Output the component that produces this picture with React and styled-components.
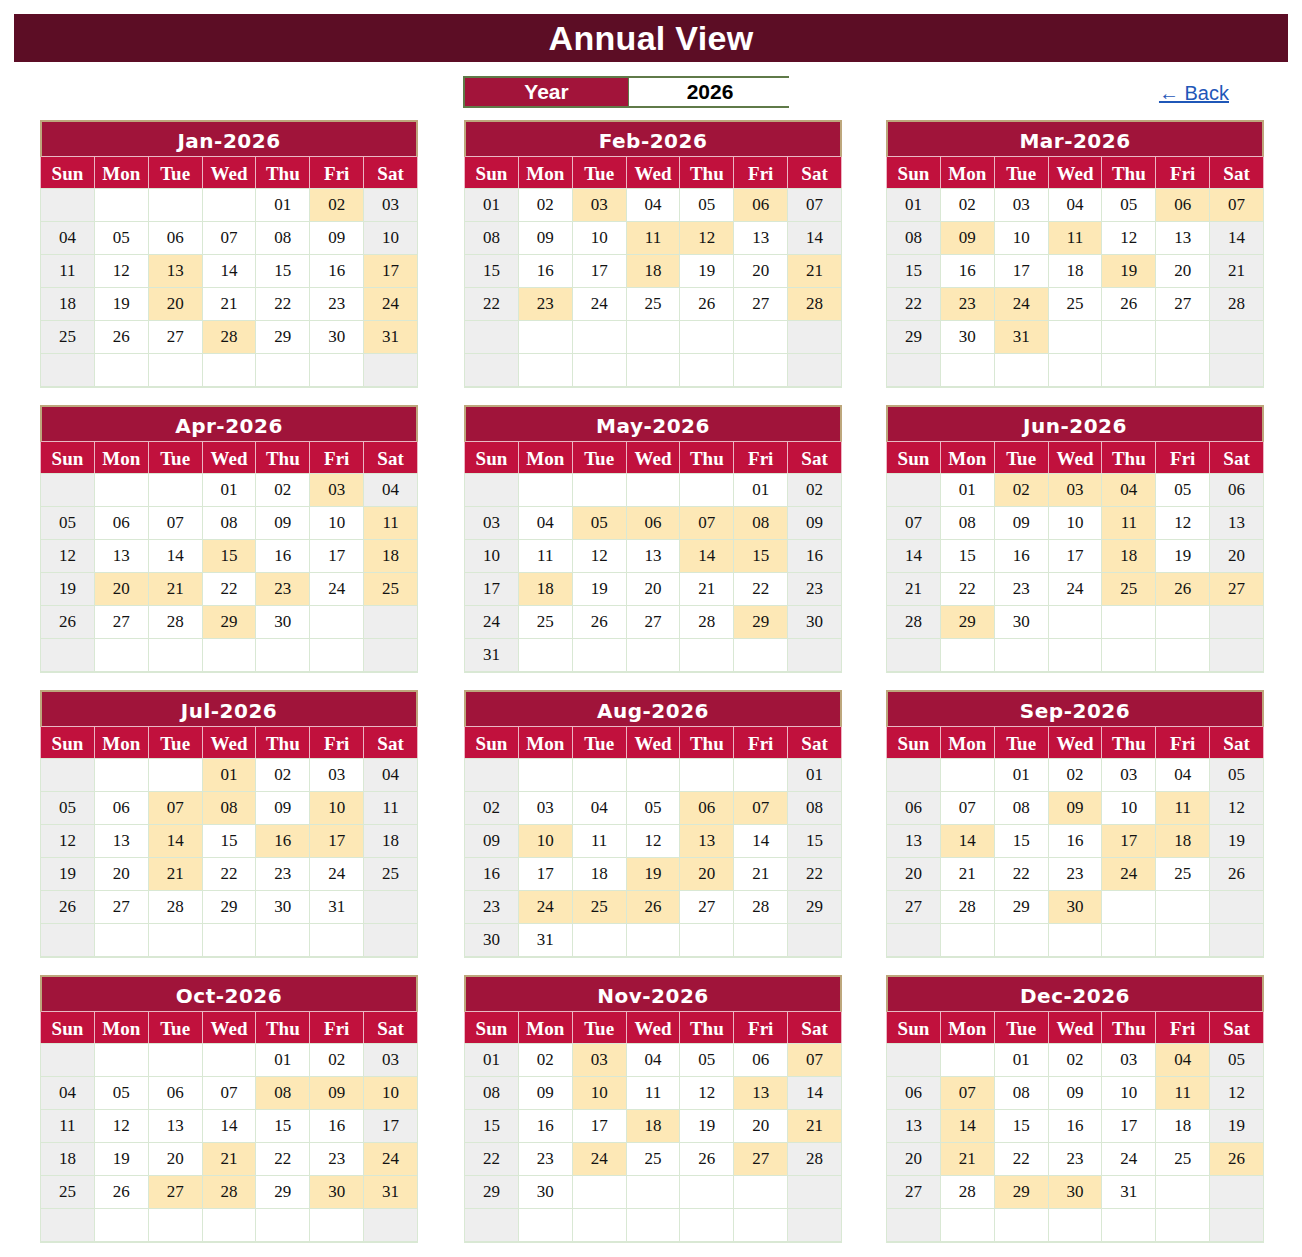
import React from 'react';
import styled, { createGlobalStyle } from 'styled-components';

const GlobalStyle = createGlobalStyle`
  html, body {
    margin: 0;
    padding: 0;
    background: #ffffff;
  }
  * {
    box-sizing: border-box;
  }
`;

const YEAR = 2026;
const MONTHS = ['Jan', 'Feb', 'Mar', 'Apr', 'May', 'Jun', 'Jul', 'Aug', 'Sep', 'Oct', 'Nov', 'Dec'];
const DAYS = ['Sun', 'Mon', 'Tue', 'Wed', 'Thu', 'Fri', 'Sat'];

// marked days per month, as read off the sheet
const MARKED = [
  [2, 13, 17, 20, 24, 28, 31],
  [3, 6, 11, 12, 18, 21, 23, 28],
  [6, 7, 9, 11, 19, 23, 24, 31],
  [3, 11, 15, 18, 20, 21, 23, 25, 29],
  [5, 6, 7, 8, 14, 15, 18, 29],
  [2, 3, 4, 11, 18, 25, 26, 27, 29],
  [1, 7, 8, 10, 14, 16, 17, 21],
  [6, 7, 10, 13, 19, 20, 24, 25, 26],
  [9, 11, 14, 17, 18, 24, 30],
  [8, 9, 10, 21, 24, 27, 28, 30, 31],
  [3, 7, 10, 13, 18, 21, 24, 27],
  [4, 7, 11, 14, 21, 26, 29, 30],
];

const Page = styled.div`
  padding: 14px;
  font-family: "Liberation Sans", Arial, sans-serif;
`;

const TitleBar = styled.h1`
  margin: 0;
  height: 48px;
  line-height: 48px;
  background: #5c0d25;
  color: #ffffff;
  text-align: center;
  font-size: 34px;
  font-weight: 700;
  letter-spacing: 0.3px;
`;

const Content = styled.div`
  padding: 0 0 0 26px;
  width: 1250px;
`;

const YearRow = styled.div`
  display: grid;
  grid-template-columns: 378px 378px 378px;
  column-gap: 46px;
  margin-top: 14px;
  height: 31px;
  align-items: center;
`;

const YearBox = styled.div`
  grid-column: 2;
  display: grid;
  grid-template-columns: 163px 163px;
  width: 326px;
  height: 32px;
  border: 2px solid #5f7a48;
  margin-left: -1px;
`;

const YearLabel = styled.div`
  background: #a2143a;
  color: #ffffff;
  font-weight: 700;
  font-size: 21px;
  display: flex;
  align-items: center;
  justify-content: center;
`;

const YearValue = styled.div`
  background: #ffffff;
  color: #000000;
  font-weight: 700;
  font-size: 21px;
  display: flex;
  align-items: center;
  justify-content: center;
  border-left: 1px solid #5f7a48;
`;

const BackLink = styled.a`
  grid-column: 3;
  justify-self: end;
  margin-right: 37px;
  margin-top: 3px;
  color: #1f57b8;
  font-size: 20px;
  text-decoration: underline;
  cursor: pointer;
`;

const CalendarGrid = styled.div`
  display: grid;
  grid-template-columns: 378px 378px 378px;
  column-gap: 45px;
  row-gap: 17px;
  margin-top: 13px;
`;

const Card = styled.div`
  width: 378px;
  margin-left: ${p => p.$shift}px;
`;

const MonthTitle = styled.div`
  height: 37px;
  padding-top: 3px;
  background: #a0143a;
  border: 2px solid #bda77c;
  border-bottom: 1px solid #e9b9c4;
  color: #ffffff;
  font-family: "Comic Sans MS", "DejaVu Sans", sans-serif;
  font-weight: 700;
  font-size: 20px;
  display: flex;
  align-items: center;
  justify-content: center;
  letter-spacing: 0.5px;
`;

const HeadRow = styled.div`
  display: grid;
  grid-template-columns: repeat(7, 1fr);
  gap: 1px;
  background: #ecb5c2;
  padding: 0 1px;
  height: 31px;
`;

const HeadCell = styled.div`
  background: #c1113d;
  color: #ffffff;
  font-family: "Liberation Serif", "Times New Roman", serif;
  font-weight: 700;
  font-size: 19px;
  padding-top: 3px;
  display: flex;
  align-items: center;
  justify-content: center;
`;

const DayGrid = styled.div`
  display: grid;
  grid-template-columns: repeat(7, 1fr);
  grid-auto-rows: 32px;
  gap: 1px;
  padding: 1px 1px 2px;
  background: #d9e8d4;
`;

const DayCell = styled.div`
  background: ${p => (p.$marked ? '#fde8b6' : p.$weekend ? '#eeeeee' : '#ffffff')};
  color: #111111;
  font-family: "Liberation Serif", "Times New Roman", serif;
  font-size: 17px;
  display: flex;
  align-items: center;
  justify-content: center;
`;

const pad = n => String(n).padStart(2, '0');

const buildCells = month => {
  const first = new Date(YEAR, month, 1).getDay();
  const count = new Date(YEAR, month + 1, 0).getDate();
  const cells = [];
  for (let i = 0; i < 42; i++) {
    const day = i - first + 1;
    cells.push(day >= 1 && day <= count ? day : null);
  }
  return cells;
};

const MonthCard = ({ month }) => {
  const cells = buildCells(month);
  const marked = MARKED[month];
  const col = month % 3;
  return (
    <Card $shift={col === 1 ? 1 : 0}>
      <MonthTitle>{MONTHS[month]}-{YEAR}</MonthTitle>
      <HeadRow>
        {DAYS.map(d => (
          <HeadCell key={d}>{d}</HeadCell>
        ))}
      </HeadRow>
      <DayGrid>
        {cells.map((day, i) => {
          const wd = i % 7;
          return (
            <DayCell
              key={i}
              $weekend={wd === 0 || wd === 6}
              $marked={day !== null && marked.includes(day)}
            >
              {day !== null ? pad(day) : ''}
            </DayCell>
          );
        })}
      </DayGrid>
    </Card>
  );
};

const App = () => {
  return (
    <Page>
      <GlobalStyle />
      <TitleBar>Annual View</TitleBar>
      <Content>
        <YearRow>
          <YearBox>
            <YearLabel>Year</YearLabel>
            <YearValue>{YEAR}</YearValue>
          </YearBox>
          <BackLink>← Back</BackLink>
        </YearRow>
        <CalendarGrid>
          {MONTHS.map((m, i) => (
            <MonthCard key={m} month={i} />
          ))}
        </CalendarGrid>
      </Content>
    </Page>
  );
};

export default App;
